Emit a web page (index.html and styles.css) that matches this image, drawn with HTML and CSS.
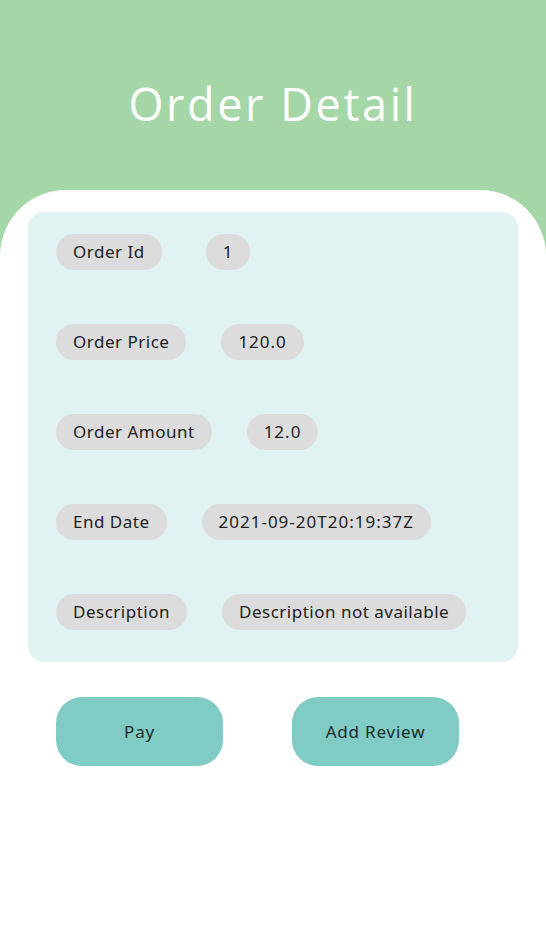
FILE: index.html
```html
<!DOCTYPE html>
<html>
<head>
<meta charset="utf-8">
<link rel="stylesheet" href="styles.css">
</head>
<body>
<div class="page">
  <header class="header"><h1 class="title">Order Detail</h1></header>
  <main class="sheet">
    <section class="card">
      <div class="row"><span class="chip">Order Id</span><span class="chip num chip-wide-gap">1</span></div>
      <div class="row"><span class="chip">Order Price</span><span class="chip num">120.0</span></div>
      <div class="row"><span class="chip">Order Amount</span><span class="chip num">12.0</span></div>
      <div class="row"><span class="chip">End Date</span><span class="chip num">2021-09-20T20:19:37Z</span></div>
      <div class="row"><span class="chip">Description</span><span class="chip">Description not available</span></div>
    </section>
    <div class="actions">
      <button class="btn">Pay</button>
      <button class="btn">Add Review</button>
    </div>
  </main>
</div>
</body>
</html>
```
FILE: styles.css
```css
* { box-sizing: border-box; }
html, body { margin: 0; padding: 0; }
body { font-family: "Noto Sans", sans-serif; }
.page {
  min-height: 100vh;
  background: #a5d6a7;
  display: flex;
  flex-direction: column;
}
.header {
  height: 190px;
  display: flex;
  justify-content: center;
  padding-top: 74px;
}
.title {
  margin: 0;
  color: #ffffff;
  font-family: "Open Sans", sans-serif;
  font-weight: 400;
  font-size: 45px;
  letter-spacing: 2.6px;
  line-height: 60px;
  height: 60px;
}
.sheet {
  flex: 1;
  background: #ffffff;
  border-radius: 66px 66px 0 0;
  padding-top: 22px;
}
.card {
  margin: 0 28px;
  background: #e0f2f1;
  border-radius: 16px;
  padding: 22px 28px 32px;
  display: flex;
  flex-direction: column;
  gap: 54px;
}
.row {
  display: flex;
  align-items: center;
  gap: 35px;
}
.chip {
  height: 36px;
  line-height: 36px;
  padding: 0 17px;
  border-radius: 18px;
  background: #dcdcdc;
  color: #222222;
  font-size: 17px;
  letter-spacing: 0.5px;
}
.num { letter-spacing: 1px; }
.chip-wide-gap { margin-left: 9px; }
.actions {
  display: flex;
  gap: 69px;
  padding: 35px 56px 0;
}
.btn {
  width: 167px;
  height: 69px;
  border: none;
  border-radius: 26px;
  background: #80cbc4;
  color: #1c2b2a;
  font-family: "Noto Sans", sans-serif;
  font-size: 17px;
  letter-spacing: 0.8px;
}
```
